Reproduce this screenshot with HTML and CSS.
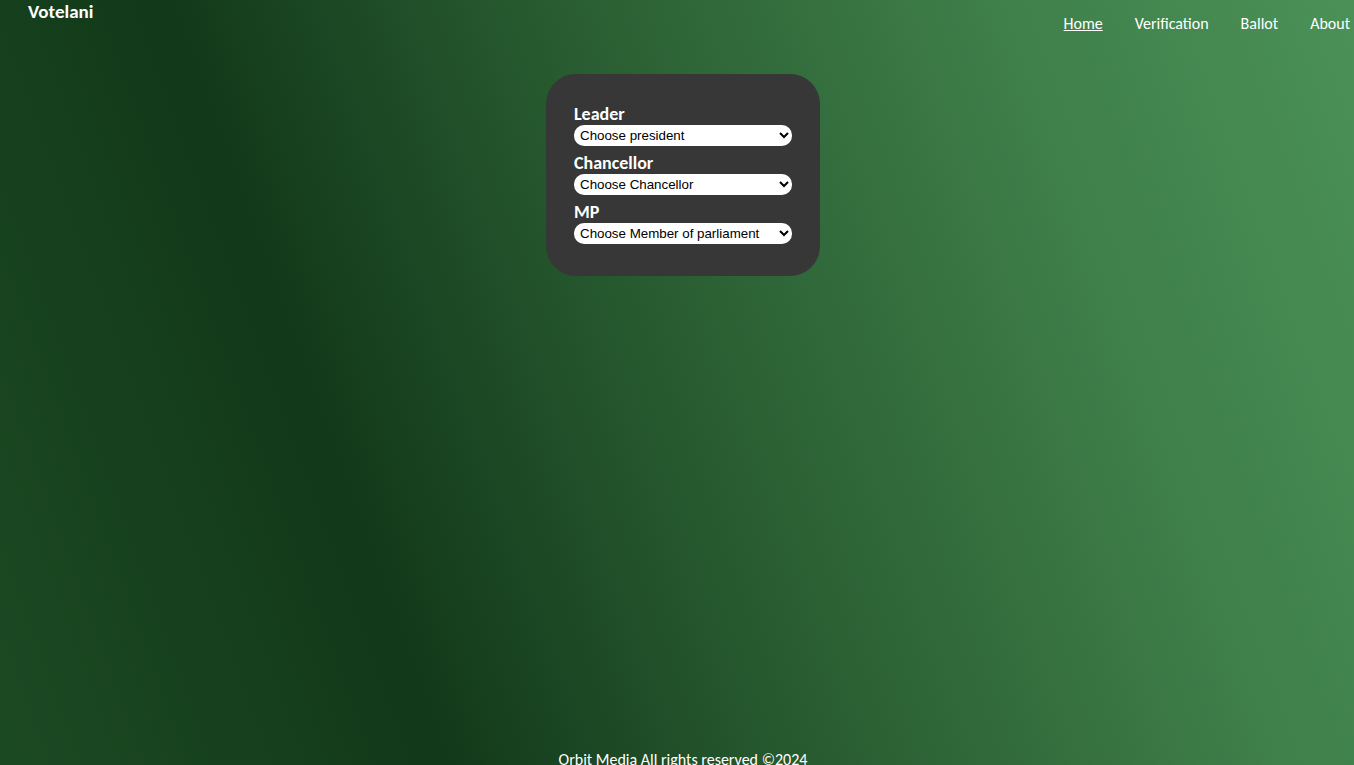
FILE: index.html
```html
<!DOCTYPE html>
<html lang="en">
<head>
<meta charset="utf-8">
<title>Votelani</title>
<link rel="stylesheet" href="styles.css">
</head>
<body>
<div class="page">
  <header class="topbar">
    <div class="brand">Votelani</div>
    <nav class="nav">
      <a class="nav-link active" href="#">Home</a>
      <a class="nav-link" href="#">Verification</a>
      <a class="nav-link" href="#">Ballot</a>
      <a class="nav-link" href="#">About</a>
    </nav>
  </header>
  <main class="main">
    <form class="card">
      <label class="field-label" for="leader">Leader</label>
      <select class="field-select" id="leader"><option>Choose president</option></select>
      <label class="field-label" for="chancellor">Chancellor</label>
      <select class="field-select" id="chancellor"><option>Choose Chancellor</option></select>
      <label class="field-label" for="mp">MP</label>
      <select class="field-select" id="mp"><option>Choose Member of parliament</option></select>
    </form>
  </main>
  <footer class="footer">Orbit Media All rights reserved ©2024</footer>
</div>
</body>
</html>
```

FILE: styles.css
```css
html, body {
  margin: 0;
  padding: 0;
  height: 100%;
  overflow: hidden;
}
body {
  font-family: "Carlito", "Lato", "Open Sans", sans-serif;
  color: #ffffff;
  background: linear-gradient(70deg, #1c4a22 0%, #12391a 27%, #2a5e32 52%, #3f7f4a 78%, #4b9157 100%);
}
.page {
  height: 765px;
  display: flex;
  flex-direction: column;
}
.topbar {
  display: flex;
  justify-content: space-between;
  align-items: flex-start;
  padding: 0 4px 0 28px;
  height: 74px;
}
.brand {
  font-weight: 700;
  font-size: 19px;
  margin-top: 1px;
  line-height: 22px;
}
.nav {
  display: flex;
  gap: 32px;
  margin-top: 14px;
}
.nav-link {
  color: #ffffff;
  text-decoration: none;
  font-size: 16px;
  line-height: 20px;
}
.nav-link.active {
  text-decoration: underline;
}
.main {
  flex: 1;
  display: flex;
  justify-content: center;
  align-items: flex-start;
}
.card {
  width: 218px;
  margin-left: 12px;
  background: #373737;
  border-radius: 30px;
  padding: 30px 28px 32px;
  display: flex;
  flex-direction: column;
}
.field-label {
  font-weight: 700;
  font-size: 18px;
  line-height: 21px;
  margin-top: 7px;
}
.field-label:first-child {
  margin-top: 0;
}
.field-select {
  width: 218px;
  height: 21px;
  border: none;
  border-radius: 10px;
  background: #ffffff;
  color: #000000;
  font-family: "Liberation Sans", Arial, sans-serif;
  font-size: 13.33px;
  padding: 0 2px;
}
.footer {
  text-align: center;
  font-size: 16px;
  line-height: 20px;
  height: 15px;
  padding-left: 12px;
}
```
